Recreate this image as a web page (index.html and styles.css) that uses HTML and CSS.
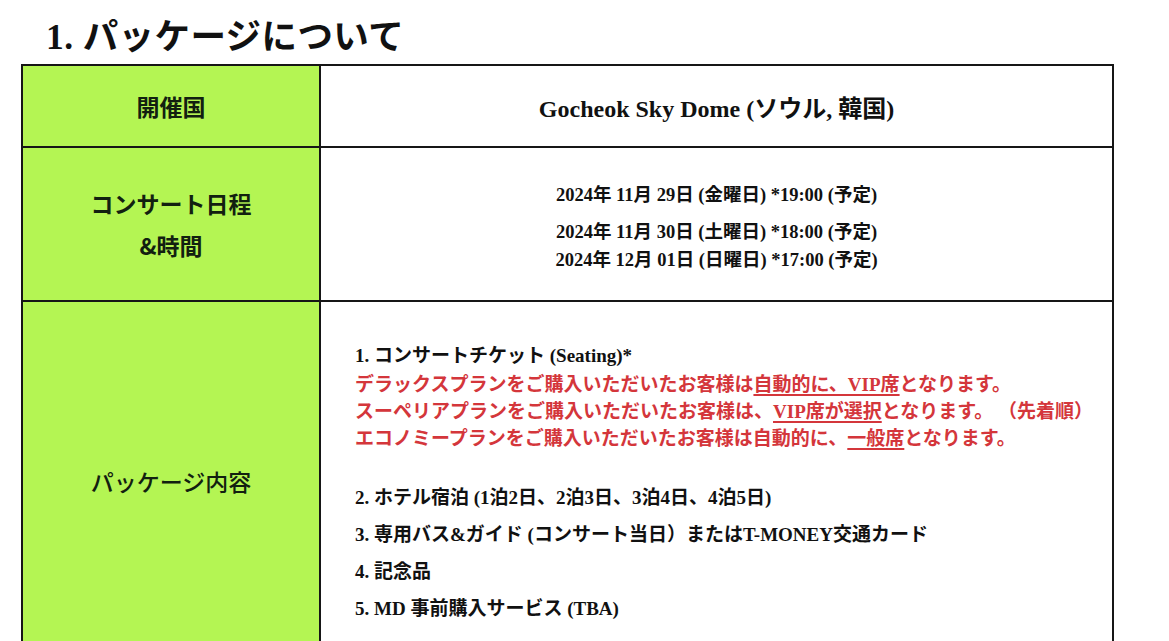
FILE: index.html
```html
<!DOCTYPE html>
<html lang="ja">
<head>
<meta charset="utf-8">
<title>1. パッケージについて</title>
<link rel="stylesheet" href="styles.css">
</head>
<body>
<h1 class="title">1. パッケージについて</h1>
<table class="info">
  <tr class="row-venue">
    <th class="label label-serif">開催国</th>
    <td class="value venue">Gocheok Sky Dome (ソウル, 韓国)</td>
  </tr>
  <tr class="row-dates">
    <th class="label label-serif">
      <div class="label-line">コンサート日程</div>
      <div class="label-line">&amp;時間</div>
    </th>
    <td class="value dates">
      <p class="date first">2024年 11月 29日 (金曜日) *19:00 (予定)</p>
      <p class="date">2024年 11月 30日 (土曜日) *18:00 (予定)</p>
      <p class="date">2024年 12月 01日 (日曜日) *17:00 (予定)</p>
    </td>
  </tr>
  <tr class="row-package">
    <th class="label label-sans">パッケージ内容</th>
    <td class="value package">
      <p class="item head">1. コンサートチケット (Seating)*</p>
      <p class="note">デラックスプランをご購入いただいたお客様は<u>自動的に、VIP席</u>となります。</p>
      <p class="note">スーペリアプランをご購入いただいたお客様は、<u>VIP席が選択</u>となります。 （先着順）</p>
      <p class="note last">エコノミープランをご購入いただいたお客様は自動的に、<u>一般席</u>となります。</p>
      <p class="item">2. ホテル宿泊 (1泊2日、2泊3日、3泊4日、4泊5日)</p>
      <p class="item">3. 専用バス&amp;ガイド (コンサート当日）またはT-MONEY交通カード</p>
      <p class="item">4. 記念品</p>
      <p class="item">5. MD 事前購入サービス (TBA)</p>
    </td>
  </tr>
</table>
</body>
</html>
```
FILE: styles.css
```css
html, body {
  margin: 0;
  padding: 0;
  background: #ffffff;
  color: #111111;
}

body {
  font-family: "Liberation Serif", "Noto Sans CJK JP", serif;
  overflow: hidden;
}

.title {
  margin: 0;
  padding: 16px 0 6px 46px;
  font-size: 35.5px;
  line-height: 42px;
  font-weight: 700;
  letter-spacing: 0.4px;
}

.info {
  margin-left: 21px;
  width: 1093px;
  border-collapse: collapse;
  table-layout: fixed;
}

.info th,
.info td {
  border: 2px solid #161616;
  padding: 0;
}

.label {
  width: 296px;
  background: #b4f553;
  text-align: center;
  vertical-align: middle;
  font-family: "Noto Sans CJK JP", sans-serif;
  font-size: 23px;
  color: #122010;
}

.label-serif {
  font-weight: 700;
}

.label-sans {
  font-weight: 500;
  vertical-align: top;
  padding-top: 162px !important;
}

.label-line {
  line-height: 42px;
}

.value {
  text-align: center;
  vertical-align: middle;
  font-weight: 700;
}

.row-venue td,
.row-venue th {
  height: 80px;
}

.venue {
  font-size: 24px;
}

.row-dates td,
.row-dates th {
  height: 146px;
}

.dates {
  padding-top: 6px !important;
}

.date {
  margin: 0;
  font-size: 18.5px;
  line-height: 28px;
}

.date.first {
  margin-bottom: 9px;
}

.row-package td,
.row-package th {
  height: 360px;
}

.package {
  text-align: left;
  vertical-align: top;
  padding: 40px 0 0 34px !important;
}

.item {
  margin: 0;
  font-size: 19px;
  line-height: 37px;
}

.item.head {
  line-height: 28px;
  margin-bottom: 1px;
}

.note {
  margin: 0;
  font-size: 19px;
  line-height: 27px;
  color: #d4363b;
}

.note.last {
  margin-bottom: 27px;
}

.note u {
  text-underline-offset: 3px;
  text-decoration-thickness: 2px;
}
```
